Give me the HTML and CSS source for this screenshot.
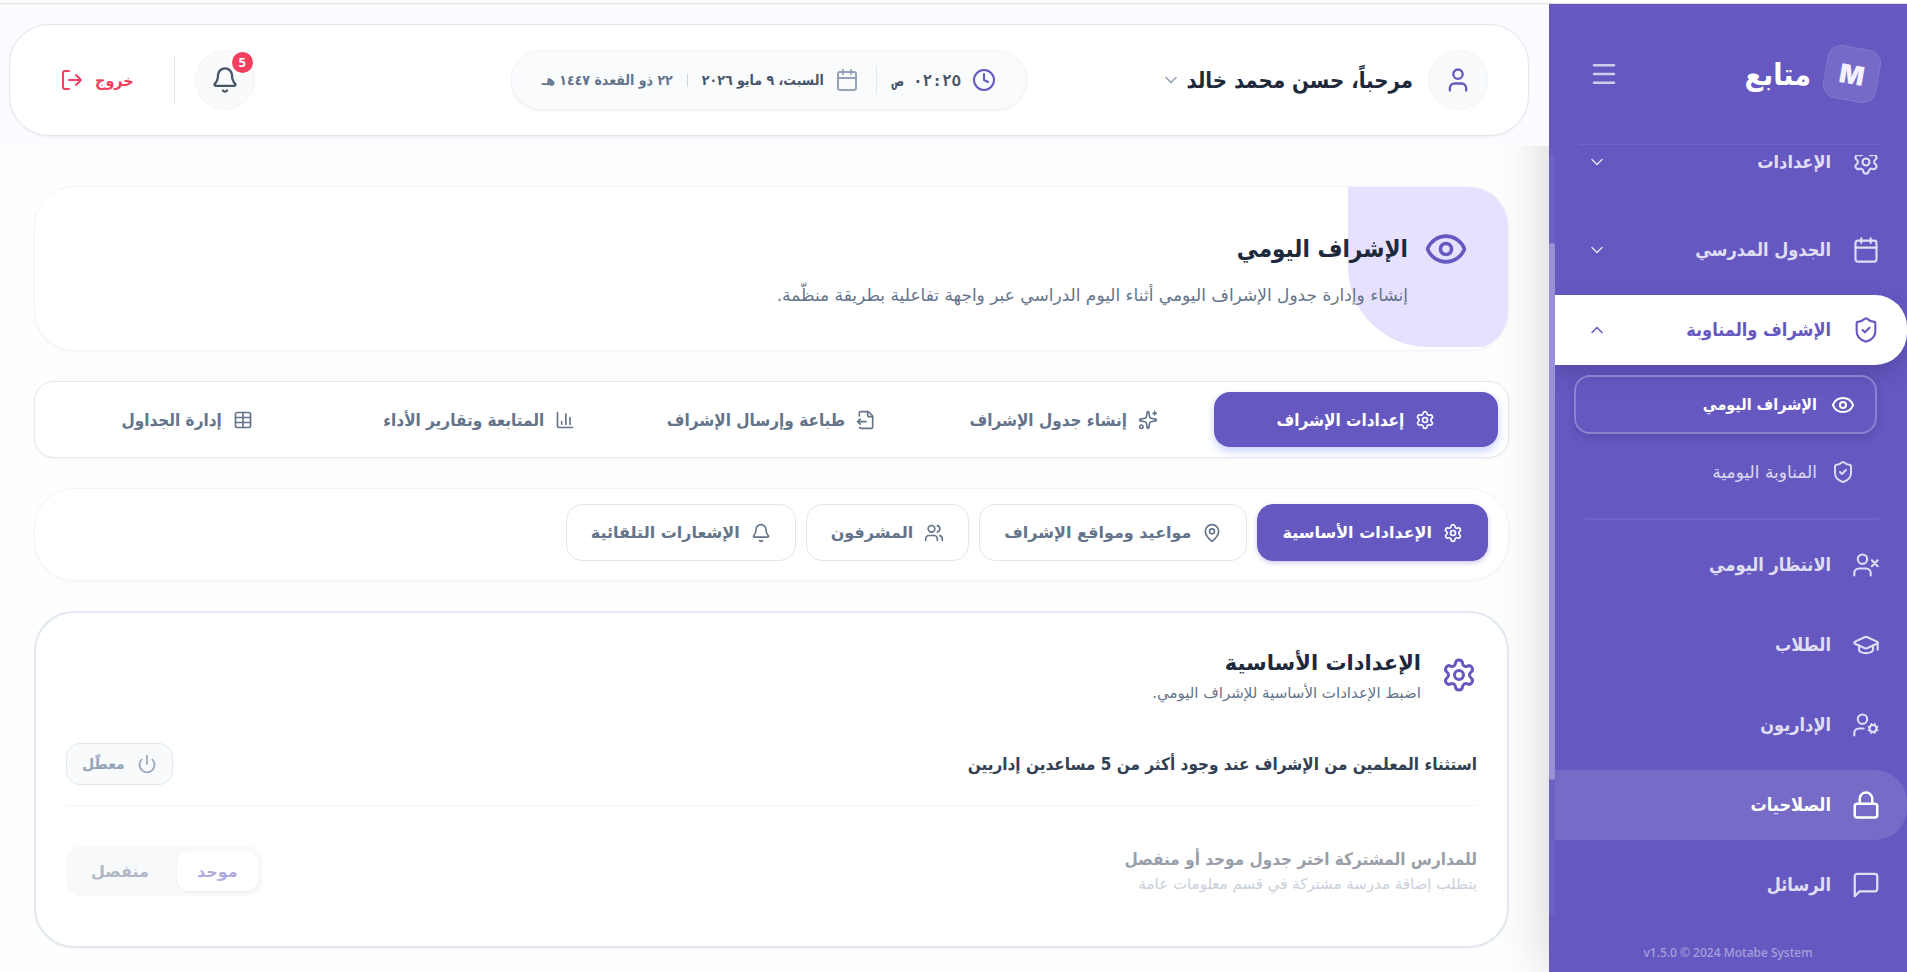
FILE: index.html
```html
<!DOCTYPE html>
<html lang="ar" dir="rtl">
<head>
    <meta charset="UTF-8">
    <meta name="viewport" content="width=device-width, initial-scale=1.0">
    <title>متابع - الإشراف اليومي</title>
    <link rel="stylesheet" href="styles.css">
</head>
<body>
    <svg class="sprite" aria-hidden="true">
        <symbol id="i-settings" viewBox="0 0 24 24"><path d="M9.671 4.136a2.34 2.34 0 0 1 4.659 0 2.34 2.34 0 0 0 3.319 1.915 2.34 2.34 0 0 1 2.33 4.033 2.34 2.34 0 0 0 0 3.831 2.34 2.34 0 0 1-2.33 4.033 2.34 2.34 0 0 0-3.319 1.915 2.34 2.34 0 0 1-4.659 0 2.34 2.34 0 0 0-3.32-1.915 2.34 2.34 0 0 1-2.33-4.033 2.34 2.34 0 0 0 0-3.831A2.34 2.34 0 0 1 6.35 6.051a2.34 2.34 0 0 0 3.319-1.915"/><circle cx="12" cy="12" r="3"/></symbol>
        <symbol id="i-calendar" viewBox="0 0 24 24"><path d="M8 2v4M16 2v4M3 10h18"/><rect x="3" y="4" width="18" height="18" rx="2"/></symbol>
        <symbol id="i-shield" viewBox="0 0 24 24"><path d="M20 13c0 5-3.5 7.500-7.660 8.950a1 1 0 0 1-.67-.01C7.500 20.500 4 18 4 13V6a1 1 0 0 1 1-1c2 0 4.500-1.200 6.240-2.720a1.170 1.170 0 0 1 1.520 0C14.510 3.810 17 5 19 5a1 1 0 0 1 1 1z"/><path d="m9 12 2 2 4-4"/></symbol>
        <symbol id="i-eye" viewBox="0 0 24 24"><path d="M2.062 12.348a1 1 0 0 1 0-.696 10.750 10.750 0 0 1 19.876 0 1 1 0 0 1 0 .696 10.750 10.750 0 0 1-19.876 0"/><circle cx="12" cy="12" r="3"/></symbol>
        <symbol id="i-user-x" viewBox="0 0 24 24"><path d="M16 21v-2a4 4 0 0 0-4-4H6a4 4 0 0 0-4 4v2"/><circle cx="9" cy="7" r="4"/><path d="m17 8 5 5M22 8l-5 5"/></symbol>
        <symbol id="i-cap" viewBox="0 0 24 24"><path d="M21.420 10.922a1 1 0 0 0-.019-1.838L12.830 5.180a2 2 0 0 0-1.660 0L2.600 9.080a1 1 0 0 0 0 1.832l8.570 3.908a2 2 0 0 0 1.660 0z"/><path d="M22 10v6M6 12.500V16a6 3 0 0 0 12 0v-3.500"/></symbol>
        <symbol id="i-user-cog" viewBox="0 0 24 24"><path d="M10 15H6a4 4 0 0 0-4 4v2"/><circle cx="9" cy="7" r="4"/><circle cx="18" cy="15" r="3"/><path d="m14.305 16.530.923-.382M15.228 13.852l-.923-.383M16.852 12.228l-.383-.923M16.852 17.772l-.383.924M19.148 12.228l.383-.923M19.530 18.696l-.382-.924M20.772 13.852l.924-.383M20.772 16.148l.924.383"/></symbol>
        <symbol id="i-lock" viewBox="0 0 24 24"><rect x="3" y="11" width="18" height="11" rx="2"/><path d="M7 11V7a5 5 0 0 1 10 0v4"/></symbol>
        <symbol id="i-message" viewBox="0 0 24 24"><path d="M21 15a2 2 0 0 1-2 2H7l-4 4V5a2 2 0 0 1 2-2h14a2 2 0 0 1 2 2z"/></symbol>
        <symbol id="i-down" viewBox="0 0 24 24"><path d="m6 9 6 6 6-6"/></symbol>
        <symbol id="i-up" viewBox="0 0 24 24"><path d="m18 15-6-6-6 6"/></symbol>
        <symbol id="i-menu" viewBox="0 0 24 24"><path d="M4 5h16M4 12h16M4 19h16"/></symbol>
        <symbol id="i-user" viewBox="0 0 24 24"><path d="M19 21v-2a4 4 0 0 0-4-4H9a4 4 0 0 0-4 4v2"/><circle cx="12" cy="7" r="4"/></symbol>
        <symbol id="i-clock" viewBox="0 0 24 24"><circle cx="12" cy="12" r="10"/><path d="M12 6v6l4 2"/></symbol>
        <symbol id="i-bell" viewBox="0 0 24 24"><path d="M10.268 21a2 2 0 0 0 3.464 0"/><path d="M3.262 15.326A1 1 0 0 0 4 17h16a1 1 0 0 0 .74-1.673C19.410 13.956 18 12.499 18 8A6 6 0 0 0 6 8c0 4.499-1.411 5.956-2.738 7.326"/></symbol>
        <symbol id="i-logout" viewBox="0 0 24 24"><path d="m16 17 5-5-5-5M21 12H9M9 21H5a2 2 0 0 1-2-2V5a2 2 0 0 1 2-2h4"/></symbol>
        <symbol id="i-sparkles" viewBox="0 0 24 24"><path d="M11.017 2.814a1 1 0 0 1 1.966 0l1.051 5.558a2 2 0 0 0 1.594 1.594l5.558 1.051a1 1 0 0 1 0 1.966l-5.558 1.051a2 2 0 0 0-1.594 1.594l-1.051 5.558a1 1 0 0 1-1.966 0l-1.051-5.558a2 2 0 0 0-1.594-1.594l-5.558-1.051a1 1 0 0 1 0-1.966l5.558-1.051a2 2 0 0 0 1.594-1.594z"/><path d="M20 2v4M22 4h-4"/><circle cx="4" cy="20" r="2"/></symbol>
        <symbol id="i-file-output" viewBox="0 0 24 24"><path d="M4.226 20.925A2 2 0 0 0 6 22h12a2 2 0 0 0 2-2V8a2.400 2.400 0 0 0-.706-1.706l-3.588-3.588A2.400 2.400 0 0 0 14 2H6a2 2 0 0 0-2 2v3.127"/><path d="M14 2v5a1 1 0 0 0 1 1h5M5 11l-3 3M5 17l-3-3h10"/></symbol>
        <symbol id="i-chart" viewBox="0 0 24 24"><path d="M3 3v16a2 2 0 0 0 2 2h16M18 17V9M13 17V5M8 17v-3"/></symbol>
        <symbol id="i-table" viewBox="0 0 24 24"><path d="M12 3v18M3 9h18M3 15h18"/><rect x="3" y="3" width="18" height="18" rx="2"/></symbol>
        <symbol id="i-pin" viewBox="0 0 24 24"><path d="M20 10c0 4.993-5.539 10.193-7.399 11.799a1 1 0 0 1-1.202 0C9.539 20.193 4 14.993 4 10a8 8 0 0 1 16 0"/><circle cx="12" cy="10" r="3"/></symbol>
        <symbol id="i-users" viewBox="0 0 24 24"><path d="M16 21v-2a4 4 0 0 0-4-4H6a4 4 0 0 0-4 4v2M16 3.128a4 4 0 0 1 0 7.744M22 21v-2a4 4 0 0 0-3-3.870"/><circle cx="9" cy="7" r="4"/></symbol>
        <symbol id="i-power" viewBox="0 0 24 24"><path d="M12 2v10M18.400 6.600a9 9 0 1 1-12.770.04"/></symbol>
    </svg>

    <aside class="sidebar">
        <div class="brand">
            <span class="brand-logo">M</span>
            <span class="brand-name">متابع</span>
            <button type="button" class="menu-btn" aria-label="القائمة"><svg class="icon s30"><use href="#i-menu"/></svg></button>
        </div>

        <div class="nav-area">
            <nav class="nav">
                <a href="#" class="nav-item first"><svg class="icon s28"><use href="#i-settings"/></svg><span>الإعدادات</span><svg class="icon s20 arrow"><use href="#i-down"/></svg></a>
                <a href="#" class="nav-item"><svg class="icon s28"><use href="#i-calendar"/></svg><span>الجدول المدرسي</span><svg class="icon s20 arrow"><use href="#i-down"/></svg></a>
                <a href="#" class="nav-item active"><svg class="icon s28"><use href="#i-shield"/></svg><span>الإشراف والمناوبة</span><svg class="icon s20 arrow"><use href="#i-up"/></svg></a>
                <div class="subnav">
                    <a href="#" class="sub-item current"><svg class="icon s24"><use href="#i-eye"/></svg><span>الإشراف اليومي</span></a>
                    <a href="#" class="sub-item"><svg class="icon s24"><use href="#i-shield"/></svg><span>المناوبة اليومية</span></a>
                </div>
                <hr class="divider">
                <a href="#" class="nav-item"><svg class="icon s28"><use href="#i-user-x"/></svg><span>الانتظار اليومي</span></a>
                <a href="#" class="nav-item"><svg class="icon s28"><use href="#i-cap"/></svg><span>الطلاب</span></a>
                <a href="#" class="nav-item"><svg class="icon s28"><use href="#i-user-cog"/></svg><span>الإداريون</span></a>
                <a href="#" class="nav-item hovered"><svg class="icon s30"><use href="#i-lock"/></svg><span>الصلاحيات</span></a>
                <a href="#" class="nav-item"><svg class="icon s30"><use href="#i-message"/></svg><span>الرسائل</span></a>
            </nav>
            <div class="track"><div class="thumb"></div></div>
        </div>

        <footer class="version" dir="ltr">v1.5.0 © 2024 Motabe System</footer>
    </aside>

    <div class="page">
        <div class="topbar">
            <header class="header">
                <button type="button" class="user">
                    <span class="circle"><svg class="icon s28"><use href="#i-user"/></svg></span>
                    <span class="user-name">مرحباً، حسن محمد خالد</span>
                    <svg class="icon s20"><use href="#i-down"/></svg>
                </button>

                <div class="datetime">
                    <svg class="icon s24 clock"><use href="#i-clock"/></svg>
                    <time class="time">٠٢:٢٥ ص</time>
                    <i class="sep"></i>
                    <svg class="icon s24"><use href="#i-calendar"/></svg>
                    <span class="date">السبت، ٩ مايو ٢٠٢٦</span>
                    <i class="sep small"></i>
                    <span class="hijri">٢٢ ذو القعدة ١٤٤٧ هـ</span>
                </div>

                <div class="actions">
                    <button type="button" class="circle bell" aria-label="الإشعارات"><svg class="icon s28"><use href="#i-bell"/></svg><span class="badge">5</span></button>
                    <i class="line"></i>
                    <button type="button" class="logout"><span>خروج</span><svg class="icon s24"><use href="#i-logout"/></svg></button>
                </div>
            </header>
        </div>

        <main class="content">
            <section class="card hero">
                <svg class="icon s44"><use href="#i-eye"/></svg>
                <div>
                    <h1>الإشراف اليومي</h1>
                    <p>إنشاء وإدارة جدول الإشراف اليومي أثناء اليوم الدراسي عبر واجهة تفاعلية بطريقة منظّمة.</p>
                </div>
            </section>

            <div class="card tabs">
                <button type="button" class="tab active"><svg class="icon s20"><use href="#i-settings"/></svg>إعدادات الإشراف</button>
                <button type="button" class="tab"><svg class="icon s20"><use href="#i-sparkles"/></svg>إنشاء جدول الإشراف</button>
                <button type="button" class="tab"><svg class="icon s20"><use href="#i-file-output"/></svg>طباعة وإرسال الإشراف</button>
                <button type="button" class="tab"><svg class="icon s20"><use href="#i-chart"/></svg>المتابعة وتقارير الأداء</button>
                <button type="button" class="tab"><svg class="icon s20"><use href="#i-table"/></svg>إدارة الجداول</button>
            </div>

            <div class="card chips">
                <button type="button" class="chip active"><svg class="icon s20"><use href="#i-settings"/></svg>الإعدادات الأساسية</button>
                <button type="button" class="chip"><svg class="icon s20"><use href="#i-pin"/></svg>مواعيد ومواقع الإشراف</button>
                <button type="button" class="chip"><svg class="icon s20"><use href="#i-users"/></svg>المشرفون</button>
                <button type="button" class="chip"><svg class="icon s20"><use href="#i-bell"/></svg>الإشعارات التلقائية</button>
            </div>

            <section class="card settings">
                <div class="settings-head">
                    <svg class="icon s36"><use href="#i-settings"/></svg>
                    <div>
                        <h2>الإعدادات الأساسية</h2>
                        <p>اضبط الإعدادات الأساسية للإشراف اليومي.</p>
                    </div>
                </div>
                <div class="row">
                    <h3>استثناء المعلمين من الإشراف عند وجود أكثر من 5 مساعدين إداريين</h3>
                    <button type="button" class="toggle" aria-pressed="false"><svg class="icon s20"><use href="#i-power"/></svg>معطّل</button>
                </div>
                <div class="row disabled">
                    <div>
                        <h3>للمدارس المشتركة اختر جدول موحد أو منفصل</h3>
                        <p>يتطلب إضافة مدرسة مشتركة في قسم معلومات عامة</p>
                    </div>
                    <div class="segment">
                        <button type="button" class="on" disabled>موحد</button>
                        <button type="button" disabled>منفصل</button>
                    </div>
                </div>
            </section>
        </main>
    </div>
</body>
</html>
```
FILE: styles.css
```css
* {
    box-sizing: border-box;
}
body {
    display: flex;
    margin: 0;
    min-height: 100vh;
    border-top: 3px solid #fff;
    background-color: #fefefe;
    font-family: "DejaVu Sans", sans-serif;
    color: #1e293b;
}
h1, h2, h3, p {
    margin: 0;
}
button {
    font-family: inherit;
    background: none;
    border: none;
    padding: 0;
    cursor: pointer;
}
a {
    text-decoration: none;
}
.sprite {
    display: none;
}
.icon {
    flex: none;
    fill: none;
    stroke: currentColor;
    stroke-width: 2;
    stroke-linecap: round;
    stroke-linejoin: round;
}
.s20 { width: 20px; height: 20px; }
.s24 { width: 24px; height: 24px; }
.s28 { width: 28px; height: 28px; }
.s30 { width: 30px; height: 30px; }
.s36 { width: 36px; height: 36px; }
.s44 { width: 44px; height: 44px; }

/* sidebar */
.sidebar {
    flex: none;
    display: flex;
    flex-direction: column;
    width: 358px;
    height: calc(100vh - 3px);
    border-top: 1px solid #e2e2e2;
    background-color: #6559c1;
    color: #e0def3;
    font-family: "DejaVu Sans Condensed", "DejaVu Sans", sans-serif;
    box-shadow: 0 0 50px rgba(0, 0, 0, 0.18);
}
.brand {
    display: flex;
    align-items: center;
    height: 141px;
    margin: 0 28px 10px 30px;
    border-bottom: 1px solid #7066c6;
}
.brand-logo {
    display: flex;
    align-items: center;
    justify-content: center;
    width: 54px;
    height: 54px;
    border: 1px solid #8076cc;
    border-radius: 14px;
    background-color: #756ac7;
    color: #f3f1fb;
    font: 900 26px Inter, sans-serif;
    transform: rotate(10deg);
}
.brand-name {
    margin-right: 14px;
    color: #fff;
    font-size: 30px;
    font-weight: bold;
}
.menu-btn {
    display: flex;
    margin-right: auto;
    margin-left: 10px;
    color: #d0cdec;
}
.nav-area {
    flex: none;
    display: flex;
    height: calc(100% - 209px);
    overflow: hidden;
}
.nav {
    flex: 1;
    display: flex;
    flex-direction: column;
    gap: 10px;
    margin-top: -28px;
}
.nav-item {
    flex: none;
    display: flex;
    align-items: center;
    gap: 21px;
    height: 70px;
    padding: 0 27px 0 32px;
    border-radius: 0 32px 32px 0;
    color: #e0def3;
    font-size: 18px;
    line-height: 20px;
    font-weight: bold;
}
.nav-item .icon {
    stroke-width: 1.8;
}
.nav-item.first {
    margin-bottom: 8px;
}
.nav-item .arrow {
    margin-right: auto;
}
.nav-item .s30 {
    margin: 0 -1px;
}
.nav-item.active {
    background-color: #fff;
    color: #6559c1;
    box-shadow: 0 10px 20px rgba(40, 30, 100, 0.25);
}
.nav-item.hovered {
    background-color: #766bc7;
    color: #fff;
}
.nav-item.hovered .icon {
    stroke-width: 2;
}
.subnav {
    margin: 0 30px 0 19px;
}
.sub-item {
    display: flex;
    align-items: center;
    gap: 14px;
    height: 59px;
    padding: 0 20px;
    border: 2px solid transparent;
    border-radius: 16px;
    color: #dcd9f1;
    font-family: "DejaVu Sans", sans-serif;
    font-size: 17px;
}
.sub-item + .sub-item {
    margin-top: 8px;
}
.sub-item.current {
    border-color: #8b82d1;
    color: #fff;
    font-family: "DejaVu Sans Condensed", "DejaVu Sans", sans-serif;
    font-size: 16px;
    font-weight: bold;
    box-shadow: 0 4px 8px rgba(40, 30, 100, 0.2);
}
.divider {
    flex: none;
    height: 2px;
    margin: 7px 28px 0 30px;
    border: none;
    background-color: #6e63c5;
}
.track {
    width: 6px;
    height: 100%;
    padding-top: 88px;
    background-color: #6c61c5;
}
.thumb {
    height: 80%;
    border-radius: 3px;
    background-color: #9991d6;
}
.version {
    margin-top: 30px;
    color: #a7a0dc;
    font: 500 12px "Noto Sans", sans-serif;
    text-align: center;
}

/* header */
.page {
    flex: 1;
    min-width: 0;
}
.topbar {
    position: relative;
    padding: 20px 20px 10px 9px;
    border-top: 1px solid #e2e2e2;
    background-color: #fcfbff;
}
.header {
    display: grid;
    grid-template-columns: 1fr auto 1fr;
    align-items: center;
    height: 112px;
    padding: 0 40px;
    border: 1px solid #e2e8f0;
    border-radius: 40px;
    background-color: #fff;
    box-shadow: 0 1px 3px rgba(0, 0, 0, 0.06);
    font-family: "DejaVu Sans Condensed", "DejaVu Sans", sans-serif;
}
.circle {
    position: relative;
    display: flex;
    align-items: center;
    justify-content: center;
    width: 60px;
    height: 60px;
    border: 1px solid #f1f5f9;
    border-radius: 50%;
    background-color: #f8fafc;
    color: #6559c1;
}
.user {
    display: flex;
    align-items: center;
    gap: 5px;
    color: #94a3b8;
}
.user-name {
    margin-right: 10px;
    color: #1e293b;
    font-size: 22px;
    font-weight: bold;
}
.datetime {
    display: flex;
    align-items: center;
    gap: 11px;
    height: 60px;
    padding: 0 30px;
    border: 1px solid #f1f5f9;
    border-radius: 30px;
    background-color: #f9fbfd;
    box-shadow: 0 1px 3px rgba(0, 0, 0, 0.06);
    color: #94a3b8;
    font-size: 14px;
    font-weight: bold;
}
.clock {
    color: #6559c1;
}
.time {
    color: #475569;
    font-family: "DejaVu Sans Mono", monospace;
    font-size: 16px;
}
.sep {
    width: 1px;
    height: 28px;
    margin: 0 6px;
    background-color: #e2e8f0;
}
.sep.small {
    height: 13px;
    margin: 0 3px;
    background-color: #cbd5e1;
}
.date {
    color: #475569;
}
.hijri {
    color: #64748b;
}
.actions {
    display: flex;
    align-items: center;
    justify-content: flex-end;
}
.bell {
    color: #475569;
}
.badge {
    position: absolute;
    top: -1px;
    right: -1px;
    width: 25px;
    height: 25px;
    border: 2px solid #fff;
    border-radius: 50%;
    background-color: #f43f5e;
    color: #fff;
    font: bold 13px/20px "Noto Sans", sans-serif;
}
.line {
    width: 1px;
    height: 50px;
    margin: 0 20px 0 40px;
    background-color: #e2e8f0;
}
.logout {
    display: flex;
    align-items: center;
    gap: 11px;
    padding-left: 10px;
    color: #f43f5e;
    font-size: 16px;
    font-weight: bold;
}

/* content */
.content {
    display: flex;
    flex-direction: column;
    gap: 30px;
    padding: 40px 40px 23px 34px;
}
.card {
    border: 1px solid #f1f5f9;
    border-radius: 40px;
    background-color: #fff;
    box-shadow: 0 1px 3px rgba(0, 0, 0, 0.04);
}
.hero {
    position: relative;
    display: flex;
    gap: 16px;
    height: 165px;
    padding: 40px;
    overflow: hidden;
}
.hero::before {
    content: "";
    position: absolute;
    top: 0;
    right: 0;
    width: 160px;
    height: 160px;
    border-bottom-left-radius: 80px;
    background-color: #e5e1fe;
}
.hero > * {
    position: relative;
}
.hero .icon {
    color: #6559c1;
}
.hero h1 {
    font-family: "DejaVu Sans Condensed", "DejaVu Sans", sans-serif;
    font-size: 24px;
    line-height: 44px;
}
.hero p {
    margin-top: 8px;
    color: #64748b;
    font-size: 17px;
    line-height: 32px;
}
.tabs {
    display: flex;
    gap: 8px;
    padding: 10px;
    border-color: #e2e8f0;
    border-radius: 20px;
}
.tab, .chip {
    display: flex;
    align-items: center;
    justify-content: center;
    gap: 11px;
    color: #64748b;
    font-size: 16px;
    font-weight: bold;
    white-space: nowrap;
}
.tab {
    flex: 1 1 0;
    height: 55px;
    border-radius: 16px;
    font-family: "DejaVu Sans Condensed", "DejaVu Sans", sans-serif;
    font-size: 17px;
}
.tab.active {
    background-color: #6559c1;
    color: #fff;
    box-shadow: 0 4px 8px #c7d2fe;
}
.chips {
    display: flex;
    flex-wrap: wrap;
    gap: 10px;
    padding: 15px 20px 19px;
}
.chip {
    height: 57px;
    padding: 0 24px;
    border: 1px solid #e2e8f0;
    border-radius: 16px;
    background-color: #fff;
}
.chip.active {
    border-color: #6559c1;
    background-color: #6559c1;
    color: #fff;
    box-shadow: 0 2px 5px #cfcaf0;
}
.settings {
    padding: 30px;
    border: 2px solid #e2e8f0;
}
.settings-head {
    display: flex;
    align-items: center;
    gap: 20px;
    height: 64px;
}
.settings-head .icon {
    color: #6559c1;
}
.settings-head h2 {
    font-size: 21px;
    line-height: 36px;
}
.settings-head p, .row p {
    color: #64748b;
    font-size: 15px;
    line-height: 24px;
}
.row {
    display: flex;
    align-items: center;
    justify-content: space-between;
}
.row h3 {
    color: #334155;
    font-family: "DejaVu Sans Condensed", "DejaVu Sans", sans-serif;
    font-size: 17px;
    line-height: 26px;
}
.row:nth-child(2) {
    margin-top: 36px;
    padding-bottom: 20px;
    border-bottom: 1px solid #f1f5f9;
}
.toggle {
    display: flex;
    align-items: center;
    gap: 12px;
    height: 42px;
    padding: 0 15px;
    border: 1px solid #e2e8f0;
    border-radius: 14px;
    background-color: #f8fafc;
    color: #94a3b8;
    font-size: 14px;
    font-weight: bold;
}
.disabled {
    padding-top: 40px;
    padding-bottom: 20px;
    opacity: 0.5;
}
.disabled p {
    color: #94a3b8;
}
.segment {
    display: flex;
    gap: 8px;
    padding: 5px;
    border-radius: 16px;
    background-color: #f1f5f9;
}
.segment button {
    height: 40px;
    padding: 0 20px;
    border-radius: 12px;
    color: #64748b;
    font-size: 16px;
    font-weight: bold;
}
.segment .on {
    background-color: #fff;
    color: #6559c1;
    box-shadow: 0 1px 3px rgba(0, 0, 0, 0.12);
}
```
